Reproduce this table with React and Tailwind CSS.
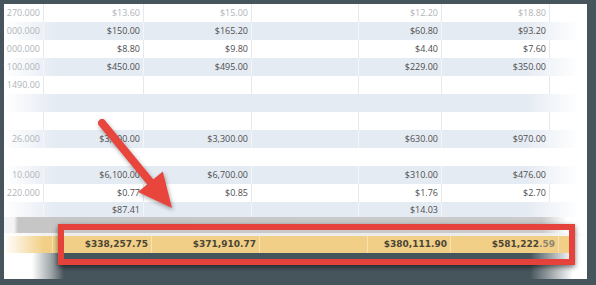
import React from "react";

const rows = [
  { cells: ["270.000", "$13.60", "$15.00", "", "$12.20", "$18.80"], faded: true },
  { cells: ["000.000", "$150.00", "$165.20", "", "$60.80", "$93.20"] },
  { cells: ["000.000", "$8.80", "$9.80", "", "$4.40", "$7.60"] },
  { cells: ["100.000", "$450.00", "$495.00", "", "$229.00", "$350.00"] },
  { cells: ["1490.00", "", "", "", "", ""] },
  { cells: ["", "", "", "", "", ""], plain: true },
  { cells: ["", "", "", "", "", ""] },
  { cells: ["26.000", "$3,300.00", "$3,300.00", "", "$630.00", "$970.00"] },
  { cells: ["", "", "", "", "", ""], plain: true },
  { cells: ["10.000", "$6,100.00", "$6,700.00", "", "$310.00", "$476.00"] },
  { cells: ["220.000", "$0.77", "$0.85", "", "$1.76", "$2.70"] },
  { cells: ["", "$87.41", "", "", "$14.03", ""], short: true },
];

const colWidths = ["w-[40px]", "w-[100px]", "w-[108px]", "w-[107px]", "w-[83px]", "w-[108px]"];

function Row({ row, striped }) {
  const bg = striped
    ? "bg-[linear-gradient(to_right,#ffffff_0px,#e5ebf3_52px,#e5ebf3_calc(100%_-_62px),#ffffff_calc(100%_-_8px))]"
    : "bg-white";
  const divider = row.plain
    ? "border-transparent"
    : striped
    ? "border-[#f3f6f9]"
    : "border-[#e6e8eb]";
  return (
    <div className={`flex ${row.short ? "h-[15px]" : "h-[18px]"} ${bg}`}>
      {row.cells.map((c, i) => (
        <div
          key={i}
          className={`${colWidths[i]} shrink-0 border-r ${divider} flex items-center justify-end pr-[3px] overflow-hidden whitespace-nowrap ${
            i === 0 || row.faded ? "text-[#b0b4b8]" : "text-[#4e4e4e]"
          }`}
        >
          {c}
        </div>
      ))}
      <div className="flex-1" />
    </div>
  );
}

const totals = [
  { w: "w-[99px]", v: "$338,257.75" },
  { w: "w-[108px]", v: "$371,910.77" },
  { w: "w-[108px]", v: "" },
  { w: "w-[83px]", v: "$380,111.90" },
  { w: "w-[108px]", v: "$581,222", tail: ".59" },
];

export default function App() {
  return (
    <div className="relative w-[596px] h-[285px] overflow-hidden bg-[#46545c] pt-[4px] pl-[4px] font-['Open_Sans',sans-serif] text-[9px]">
      <div className="w-[583px] bg-white">
        {rows.map((r, i) => (
          <Row key={i} row={r} striped={i % 2 === 1} />
        ))}

        {/* grey band above the totals */}
        <div className="h-[16px] bg-[linear-gradient(to_right,#f4f4f4_0px,#f4f4f4_10px,#c6c6c6_14px,#cbcbcb_calc(100%_-_45px),#ffffff_calc(100%_-_20px))]" />
        <div className="h-[3px] bg-[linear-gradient(to_right,#ffffff,#ececec_60px,#ececec_calc(100%_-_40px),#ffffff)]" />

        {/* totals row */}
        <div className="flex h-[17px] font-['DejaVu_Sans',sans-serif] font-bold text-[9px] text-[#4a4535]">
          <div className="w-[49px] shrink-0 border-r border-[#f6e2b4] bg-[linear-gradient(to_right,#ffffff,#f2cf86_40px)]" />
          {totals.map((t, i) => (
            <div
              key={i}
              className={`${t.w} shrink-0 border-r border-[#f6e2b4] bg-[#f2cf86] flex items-center justify-end pr-[3px] whitespace-nowrap`}
            >
              {t.v}
              {t.tail && <span className="text-[#8d8572]">{t.tail}</span>}
            </div>
          ))}
          <div className="w-[16px] shrink-0 bg-[#f2cf86]" />
          <div className="flex-1 bg-white" />
        </div>

        {/* cut-away bottom edge */}
        <div className="h-[26px] bg-[linear-gradient(to_right,#ffffff_0px,#ffffff_28px,#9aa1a5_48px,#46545c_60px,#46545c_calc(100%_-_57px),#ffffff_calc(100%_-_14px))]" />
      </div>

      {/* red highlight box */}
      <div className="absolute left-[58px] top-[224px] w-[517px] h-[41px] border-[6px] border-[#e4423b] shadow-[0_2px_5px_rgba(0,0,0,0.55)]" />

      {/* arrow */}
      <svg
        className="absolute left-0 top-0 drop-shadow-[1px_2px_2px_rgba(0,0,0,0.35)]"
        width="596"
        height="285"
        viewBox="0 0 596 285"
      >
        <line x1="102" y1="123" x2="152" y2="184" stroke="#e8463d" strokeWidth="8" strokeLinecap="round" />
        <polygon points="172,208 162.8,171.6 138,192" fill="#e8463d" />
      </svg>
    </div>
  );
}
